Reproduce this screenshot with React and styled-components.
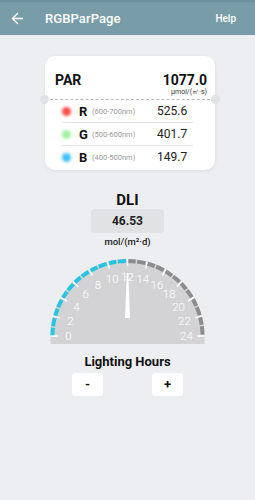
import React from "react";
import styled, { createGlobalStyle } from "styled-components";
import { ArrowLeft } from "lucide-react";

const GlobalStyle = createGlobalStyle`
  html, body { margin: 0; padding: 0; }
  body {
    background: #eceef2;
    font-family: Roboto, "Noto Sans", Arial, sans-serif;
    color: #111;
    width: 255px;
    height: 500px;
    overflow: hidden;
  }
`;

const Page = styled.div`
  width: 255px;
  min-height: 500px;
  display: flex;
  flex-direction: column;
`;

const Header = styled.header`
  height: 35px;
  box-sizing: border-box;
  border-top: 2px solid #6d919b;
  background: #789da8;
  display: flex;
  align-items: center;
  padding: 0 19px 0 9px;
  color: #fff;
`;

const BackButton = styled.span`
  display: flex;
  align-items: center;
  width: 36px;
`;

const Title = styled.h1`
  margin: 0;
  font-size: 13px;
  font-weight: 500;
  flex: 1;
  letter-spacing: 0.1px;
`;

const Help = styled.span`
  font-size: 10px;
  font-weight: 500;
`;

const Card = styled.section`
  position: relative;
  margin: 21px 0 0 45px;
  width: 170px;
  background: #fff;
  border-radius: 10px;
  box-shadow: 0 1px 4px rgba(0, 0, 0, 0.07);
  padding-bottom: 2px;
`;

const Summary = styled.div`
  display: grid;
  grid-template-columns: 1fr auto;
  padding: 16px 8px 2px 10px;
`;

const ParLabel = styled.span`
  font-size: 14px;
  font-weight: 700;
  line-height: 16px;
`;

const ParValue = styled.span`
  font-size: 14px;
  font-weight: 700;
  line-height: 16px;
  text-align: right;
`;

const ParUnit = styled.span`
  grid-column: 1 / span 2;
  text-align: right;
  font-size: 7px;
  line-height: 9px;
  color: #333;
`;

const Divider = styled.div`
  position: relative;
  border-top: 1px dashed #b9bbbf;
`;

const Notch = styled.span`
  position: absolute;
  top: -5px;
  ${(p) => (p.side === "left" ? "left: -5px;" : "right: -5px;")}
  width: 9px;
  height: 9px;
  border-radius: 50%;
  background: #e0e2e6;
`;

const Rows = styled.div`
  margin: 0 22px 0 17px;
`;

const Row = styled.div`
  display: grid;
  grid-template-columns: 17px 13px 65px 1fr;
  align-items: center;
  height: 22px;
  border-bottom: ${(p) => (p.last ? "none" : "1px solid #e6e6e8")};
`;

const Dot = styled.span`
  width: 9px;
  height: 9px;
  margin-left: -0.5px;
  border-radius: 50%;
  background: ${(p) => p.color};
  filter: blur(1.5px);
`;

const Channel = styled.span`
  font-size: 13px;
  font-weight: 700;
`;

const Range = styled.span`
  font-size: 7.5px;
  color: #9a9a9a;
`;

const ChannelValue = styled.span`
  font-size: 12px;
  color: #222;
`;

const DliSection = styled.section`
  display: flex;
  flex-direction: column;
  align-items: center;
  margin-top: 21px;
`;

const DliTitle = styled.h2`
  margin: 0;
  font-size: 15px;
  font-weight: 700;
  line-height: 18px;
`;

const DliBox = styled.div`
  width: 73px;
  height: 24px;
  border-radius: 4px;
  background: #e1e2e4;
  display: flex;
  align-items: center;
  justify-content: center;
  font-size: 12px;
  font-weight: 700;
  color: #222;
`;

const DliUnit = styled.span`
  margin-top: 3px;
  font-size: 9.5px;
  font-weight: 500;
  line-height: 12px;
  color: #222;
`;

const GaugeSvg = styled.svg`
  display: block;
  margin-top: 8px;
`;

const HoursLabel = styled.h3`
  margin: 8px 0 0;
  font-size: 13px;
  font-weight: 700;
  line-height: 16px;
`;

const Controls = styled.div`
  display: flex;
  gap: 49px;
  margin-top: 3px;
`;

const StepButton = styled.button`
  width: 31px;
  height: 23px;
  border: none;
  border-radius: 3px;
  background: #fff;
  font-family: inherit;
  font-size: 13px;
  font-weight: 700;
  color: #111;
  padding: 0;
  display: flex;
  align-items: center;
  justify-content: center;
`;

const channels = [
  { name: "R", range: "(600-700nm)", value: "525.6", color: "#ff4a4a" },
  { name: "G", range: "(500-600nm)", value: "401.7", color: "#a2f0a2" },
  { name: "B", range: "(400-500nm)", value: "149.7", color: "#3ec2f5" },
];

function Gauge({ hours }) {
  const cx = 80.5;
  const cy = 80;
  const r = 75;
  const pt = (h, rad) => {
    const a = Math.PI - (h / 24) * Math.PI;
    return [cx + rad * Math.cos(a), cy - rad * Math.sin(a)];
  };
  const [vx, vy] = pt(hours, r);
  const ticks = [];
  const labels = [];
  for (let h = 0; h <= 24; h += 2) {
    const [x1, y1] = pt(h, 77);
    const [x2, y2] = pt(h, 70);
    ticks.push(
      <line key={"t" + h} x1={x1} y1={y1} x2={x2} y2={y2} stroke="#fff" strokeWidth="1.5" />
    );
    const [lx, ly] = pt(h, 59);
    labels.push(
      <text
        key={"l" + h}
        x={lx}
        y={ly}
        fill="#fff"
        fontSize="11.5"
        fontWeight="300"
        textAnchor="middle"
        dominantBaseline="central"
        fontFamily="Roboto, sans-serif"
      >
        {h}
      </text>
    );
  }
  const ang = Math.PI - (hours / 24) * Math.PI;
  const dx = Math.cos(ang);
  const dy = -Math.sin(ang);
  const nx = -dy;
  const ny = dx;
  const base = 18;
  const tip = 63;
  const needle = [
    [cx + dx * base + nx * 2.5, cy + dy * base + ny * 2.5],
    [cx + dx * tip + nx * 0.7, cy + dy * tip + ny * 0.7],
    [cx + dx * tip - nx * 0.7, cy + dy * tip - ny * 0.7],
    [cx + dx * base - nx * 2.5, cy + dy * base - ny * 2.5],
  ]
    .map((p) => p.join(","))
    .join(" ");
  return (
    <GaugeSvg width="161" height="90" viewBox="0 0 161 90">
      <path
        d={`M ${cx - 77} ${cy} A 77 77 0 0 1 ${cx + 77} ${cy} L ${cx + 77} 88 L ${cx - 77} 88 Z`}
        fill="#d3d3d5"
      />
      <path
        d={`M ${cx - r} ${cy} A ${r} ${r} 0 0 1 ${vx} ${vy}`}
        fill="none"
        stroke="#27c4e4"
        strokeWidth="4"
        strokeDasharray="8.3 1.5"
      />
      <path
        d={`M ${vx} ${vy} A ${r} ${r} 0 0 1 ${cx + r} ${cy}`}
        fill="none"
        stroke="#8c8c8e"
        strokeWidth="4"
        strokeDasharray="8.3 1.5"
      />
      {ticks}
      {labels}
      <polygon points={needle} fill="#fff" />
    </GaugeSvg>
  );
}

export default function App() {
  return (
    <Page>
      <GlobalStyle />
      <Header>
        <BackButton>
          <ArrowLeft size={17} strokeWidth={2} color="#fff" />
        </BackButton>
        <Title>RGBParPage</Title>
        <Help>Help</Help>
      </Header>

      <Card>
        <Summary>
          <ParLabel>PAR</ParLabel>
          <ParValue>1077.0</ParValue>
          <ParUnit>μmol/(㎡·s)</ParUnit>
        </Summary>
        <Divider>
          <Notch side="left" />
          <Notch side="right" />
        </Divider>
        <Rows>
          {channels.map((c, i) => (
            <Row key={c.name} last={i === channels.length - 1}>
              <Dot color={c.color} />
              <Channel>{c.name}</Channel>
              <Range>{c.range}</Range>
              <ChannelValue>{c.value}</ChannelValue>
            </Row>
          ))}
        </Rows>
      </Card>

      <DliSection>
        <DliTitle>DLI</DliTitle>
        <DliBox>46.53</DliBox>
        <DliUnit>mol/(m²·d)</DliUnit>
        <Gauge hours={12} />
        <HoursLabel>Lighting Hours</HoursLabel>
        <Controls>
          <StepButton>-</StepButton>
          <StepButton>+</StepButton>
        </Controls>
      </DliSection>
    </Page>
  );
}
